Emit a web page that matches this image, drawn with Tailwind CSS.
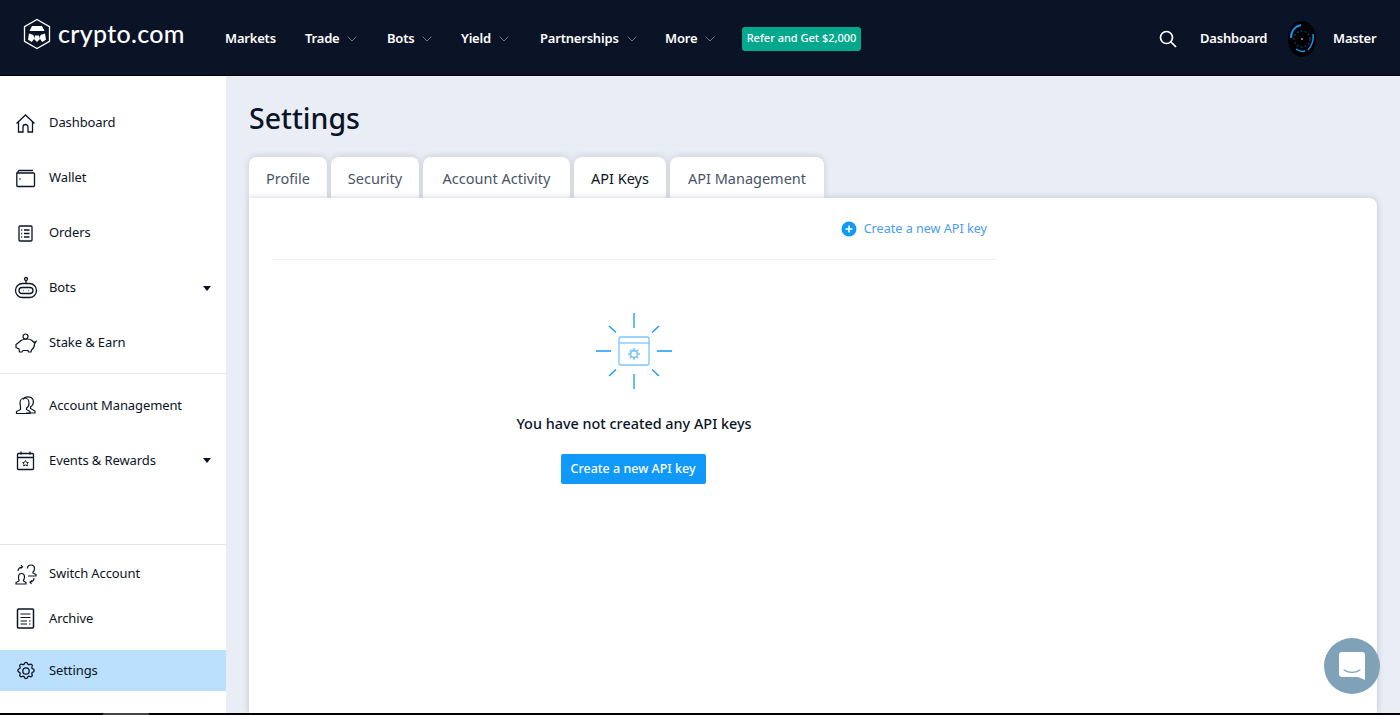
<!DOCTYPE html>
<html>
<head>
<meta charset="utf-8">
<script src="https://cdn.jsdelivr.net/npm/@tailwindcss/browser@4"></script>
</head>
<body class="flex flex-col w-[1400px] h-[715px] overflow-hidden bg-black font-['Noto_Sans',sans-serif] text-[#0b1426]">
<div class="relative flex flex-col shrink-0 w-[1400px] h-[713px] overflow-hidden bg-[#e9edf5]">
  <!-- Header -->
  <header class="flex items-center shrink-0 h-[76px] pt-[2px] bg-[#0b1426] border-b border-black text-white">
    <div class="flex items-center w-[225px] pl-[22px] pb-[10px] gap-[6px]">
      <svg class="w-[30px] h-[32px]" viewBox="0 0 30 32" fill="none">
        <path d="M15 1.500 27.500 8.700V23.300L15 30.500 2.500 23.300V8.700Z" stroke="#fff" stroke-width="1.300"/>
        <path d="M10 8h10l2.500 5h-15Z" fill="#fff"/>
        <path d="M7 15.500l4.500 1.500.8 3.500-2.500 3.500-3.800-2.200Z M23 15.500l-4.500 1.500-.8 3.500 2.500 3.500 3.800-2.200Z" fill="#fff"/>
        <path d="M13 17.500h4l1 3.500-3 3-3-3Z" fill="#fff"/>
      </svg>
      <span class="text-[25px] leading-none font-['Lato',sans-serif] font-medium tracking-[0.3px]">crypto.com</span>
    </div>
    <nav class="flex items-center text-[13px] font-semibold tracking-[-0.2px]">
      <a class="w-[80px]">Markets</a>
      <a class="flex items-center w-[82px] gap-[8px]">Trade<svg class="w-[10px] h-[6px]" viewBox="0 0 10 6" fill="none" stroke="#6b7488"><path d="M.5.5 5 5 9.500.5"/></svg></a>
      <a class="flex items-center w-[74px] gap-[8px]">Bots<svg class="w-[10px] h-[6px]" viewBox="0 0 10 6" fill="none" stroke="#6b7488"><path d="M.5.5 5 5 9.500.5"/></svg></a>
      <a class="flex items-center w-[79px] gap-[8px]">Yield<svg class="w-[10px] h-[6px]" viewBox="0 0 10 6" fill="none" stroke="#6b7488"><path d="M.5.5 5 5 9.500.5"/></svg></a>
      <a class="flex items-center w-[125px] gap-[8px]">Partnerships<svg class="w-[10px] h-[6px]" viewBox="0 0 10 6" fill="none" stroke="#6b7488"><path d="M.5.5 5 5 9.500.5"/></svg></a>
      <a class="flex items-center w-[77px] gap-[8px]">More<svg class="w-[10px] h-[6px]" viewBox="0 0 10 6" fill="none" stroke="#6b7488"><path d="M.5.5 5 5 9.500.5"/></svg></a>
      <a class="flex items-center justify-center w-[119px] h-[24px] rounded-[3px] bg-[#04a88c] text-[11px] font-medium tracking-normal whitespace-nowrap">Refer and Get $2,000</a>
    </nav>
    <div class="flex items-center ml-auto text-[13px] font-semibold tracking-[-0.2px]">
      <svg class="w-[18px] h-[18px] mr-[23px]" viewBox="0 0 18 18" fill="none" stroke="#fff" stroke-width="1.700"><circle cx="7.500" cy="7.500" r="6"/><path d="M12 12l5 5"/></svg>
      <span class="w-[87px]">Dashboard</span>
      <svg class="w-[30px] h-[38px] mr-[16px]" viewBox="0 0 30 38" fill="none">
        <ellipse cx="15" cy="19" rx="14" ry="18" fill="#000"/>
        <path d="M4 18C4 10 9 6 14 5" stroke="#1199fa" stroke-width="2"/>
        <path d="M26 14c1 5-1 12-5 16" stroke="#1199fa" stroke-width="1.500"/>
        <path d="M9 29c3 2 6 3 9 2" stroke="#1199fa" stroke-width="1.500"/>
        <circle cx="15" cy="19" r="8" stroke="#136" stroke-width="1.500" stroke-dasharray="2 2"/>
        <circle cx="15" cy="19" r="1" fill="#9aa"/>
      </svg>
      <span class="w-[67px]">Master</span>
    </div>
  </header>

  <div class="flex flex-1 min-h-0">
    <!-- Sidebar -->
    <aside class="flex flex-col w-[226px] shrink-0 bg-white text-[13px] tracking-[-0.1px]">
      <div class="pt-[19.500px] pb-[2.500px] border-b border-[#e4e6ea]">
        <a class="flex items-center h-[55px] pl-[15px] gap-[13px]">
          <svg class="w-[21px] h-[21px]" viewBox="0 0 21 21" fill="none" stroke="#0b1426" stroke-width="1.300"><path d="M1.500 10.500 10.500 2l9 8.500M3.500 9v10h4.500v-5a2.500 2.500 0 0 1 5 0v5h4.500V9"/></svg>
          Dashboard
        </a>
        <a class="flex items-center h-[55px] pl-[15px] gap-[13px]">
          <svg class="w-[21px] h-[21px]" viewBox="0 0 21 21" fill="none" stroke="#0b1426" stroke-width="1.300"><path d="M3 5V4q0-1.500 1.500-1.500H18M3 5h15.500q1 0 1 1v11.500q0 1-1 1H3q-1.200 0-1.200-1V5Z"/><circle cx="5" cy="11" r=".8" fill="#0b1426" stroke="none"/></svg>
          Wallet
        </a>
        <a class="flex items-center h-[55px] pl-[15px] gap-[13px]">
          <svg class="w-[21px] h-[21px]" viewBox="0 0 21 21" fill="none" stroke="#0b1426" stroke-width="1.300"><rect x="4" y="3" width="13" height="15" rx="1"/><path d="M9 7h5.500M9 10.500h5.500M9 14h5.500M6.200 7h1M6.200 10.500h1M6.200 14h1"/></svg>
          Orders
        </a>
        <a class="flex items-center h-[55px] pl-[14px] gap-[11px]">
          <svg class="w-[24px] h-[24px]" viewBox="0 0 24 24" fill="none" stroke="#0b1426" stroke-width="1.300"><circle cx="12" cy="3" r="1.500"/><path d="M12 4.500V7"/><rect x="1.500" y="7.500" width="21" height="14" rx="7"/><rect x="5" y="11.500" width="14" height="6" rx="3"/><path d="M9 14.500h.5M14.500 14.500h.5"/></svg>
          Bots
          <svg class="ml-auto mr-[15px] w-[8px] h-[5px]" viewBox="0 0 8 5" fill="#0b1426"><path d="M0 0h8L4 5Z"/></svg>
        </a>
        <a class="flex items-center h-[55px] pl-[14px] gap-[12px]">
          <svg class="w-[23px] h-[23px]" viewBox="0 0 23 23" fill="none" stroke="#0b1426" stroke-width="1.200"><circle cx="11.500" cy="4.500" r="2.500"/><path d="M7 8.500c3-2 9-2 11 0l2 2 2-1-1.500 2.500c0 3-1.500 5-3 6l-.5 2h-2.500l-.5-1.500h-5L8 20H5.500l-.5-3-3-1.500v-3l2-1.500Z"/></svg>
          Stake &amp; Earn
        </a>
      </div>
      <div class="pt-[4px] flex-1">
        <a class="flex items-center h-[55px] pl-[15px] gap-[12px]">
          <svg class="w-[22px] h-[22px]" viewBox="0 0 22 22" fill="none" stroke="#0b1426" stroke-width="1.200"><path d="M8 4.500c2-3.500 8-3.500 10 0 1 3-.5 6-2.500 7.500v1.500l4.500 2.500v2H11"/><path d="M5 8c0-3 2-5 4.500-5S14 5 14 8s-1.500 4.500-2.500 5v1.500l3.500 2v2H1.500v-2l4-2V13C6 12.500 5 11 5 8Z"/></svg>
          Account Management
        </a>
        <a class="flex items-center h-[55px] pl-[15px] gap-[13px]">
          <svg class="w-[21px] h-[21px]" viewBox="0 0 21 21" fill="none" stroke="#0b1426" stroke-width="1.300"><rect x="2.500" y="3.500" width="16" height="16" rx="1"/><path d="M2.500 7.500h16M6 1.500v3M15 1.500v3"/><path d="m10.500 10.500.9 1.800 2 .3-1.400 1.400.3 2-1.800-1-1.800 1 .3-2-1.400-1.400 2-.3Z" stroke-width=".9"/></svg>
          Events &amp; Rewards
          <svg class="ml-auto mr-[15px] w-[8px] h-[5px]" viewBox="0 0 8 5" fill="#0b1426"><path d="M0 0h8L4 5Z"/></svg>
        </a>
      </div>
      <div class="border-t border-[#e4e6ea] pt-[7px] pb-[22px]">
        <a class="flex items-center h-[44px] pl-[15px] gap-[12px]">
          <svg class="w-[22px] h-[22px]" viewBox="0 0 22 22" fill="none" stroke="#0b1426" stroke-width="1.200"><path d="M12.500 5.500c0-2 1.500-3.500 3.500-3.500s3.500 1.500 3.500 3.500-1 3-1.500 3.500v1l3 1.500v1.500H13"/><path d="M3.500 14c0-2 1-3.500 3-3.500s3 1.500 3 3.500-.5 2.500-1 3v1l2.500 1.500V21H1v-1.500L4 18v-1c-.5-.5-.5-1-.5-3Z"/><path d="M3 8c0-2 1.500-3.500 4-4M6 2l1.500 2L5.500 5.500M19 15c0 2-1 3.500-3.500 4M16.500 21 15 19l2-1.500"/></svg>
          Switch Account
        </a>
        <a class="flex items-center h-[45px] pl-[15px] gap-[13px]">
          <svg class="w-[21px] h-[21px]" viewBox="0 0 21 21" fill="none" stroke="#0b1426" stroke-width="1.500"><rect x="2.500" y="1" width="16" height="19" rx="1"/><path d="M5.500 6h10M5.500 9.500h10M5.500 13h6.500M5.500 16h6.500M14 13h1.500M14 16h1.500" stroke-width="1.200"/></svg>
          Archive
        </a>
        <a class="flex items-center h-[41px] mt-[9px] pl-[15px] pt-[1px] gap-[12px] bg-[#bae0fd]">
          <svg class="w-[22px] h-[22px]" viewBox="0 0 24 24" fill="none" stroke="#0b1426" stroke-width="1.400"><path d="M10.300 2.800c.4-1.700 3-1.700 3.400 0a1.700 1.700 0 0 0 2.600 1c1.500-.9 3.200.8 2.300 2.300a1.700 1.700 0 0 0 1 2.600c1.700.4 1.700 3 0 3.400a1.700 1.700 0 0 0-1 2.600c.9 1.500-.8 3.200-2.300 2.300a1.700 1.700 0 0 0-2.600 1c-.4 1.700-3 1.700-3.400 0a1.700 1.700 0 0 0-2.600-1c-1.500.9-3.200-.8-2.300-2.300a1.700 1.700 0 0 0-1-2.600c-1.700-.4-1.700-3 0-3.400a1.700 1.700 0 0 0 1-2.600C4.500 4.600 6.200 2.900 7.700 3.800a1.700 1.700 0 0 0 2.600-1Z" transform="translate(0 1)"/><circle cx="12" cy="11" r="3.500" transform="translate(0 1)"/></svg>
          Settings
        </a>
      </div>
    </aside>

    <!-- Main -->
    <main class="flex flex-col flex-1 min-w-0 pl-[23px] pr-[23px]">
      <h1 class="h-[81px] pt-[19px] text-[28.500px] leading-[46px] font-medium">Settings</h1>
      <div class="flex gap-[4px] text-[14.500px] text-[#4a5467]">
        <a class="flex items-center justify-center w-[78px] h-[41px] pt-[2px] bg-white rounded-t-[8px] shadow-[0_-1px_6px_rgba(60,70,100,0.18)]">Profile</a>
        <a class="flex items-center justify-center w-[88px] h-[41px] pt-[2px] bg-white rounded-t-[8px] shadow-[0_-1px_6px_rgba(60,70,100,0.18)]">Security</a>
        <a class="flex items-center justify-center w-[147px] h-[41px] pt-[2px] bg-white rounded-t-[8px] shadow-[0_-1px_6px_rgba(60,70,100,0.18)]">Account Activity</a>
        <a class="flex items-center justify-center w-[92px] h-[41px] pt-[2px] bg-white rounded-t-[8px] shadow-[0_-1px_6px_rgba(60,70,100,0.18)] text-[#0b1426]">API Keys</a>
        <a class="flex items-center justify-center w-[154px] h-[41px] pt-[2px] bg-white rounded-t-[8px] shadow-[0_-1px_6px_rgba(60,70,100,0.18)]">API Management</a>
      </div>
      <section class="relative flex-1 bg-white rounded-tr-[8px] shadow-[0_0_6px_rgba(60,70,100,0.25)] pl-[23px]">
        <div class="flex flex-col items-center w-[724px]">
          <div class="flex items-center justify-end self-stretch h-[62px] pr-[9px] pt-[1px] border-b border-[#eef0f4] gap-[7px] text-[12.600px] text-[#4a9cf0]">
            <svg class="w-[16px] h-[16px]" viewBox="0 0 16 16"><circle cx="8" cy="8" r="7.500" fill="#1199fa"/><path d="M8 4.500v7M4.500 8h7" stroke="#fff" stroke-width="1.600"/></svg>
            Create a new API key
          </div>
          <svg class="w-[76px] h-[76px] mt-[53px]" viewBox="0 0 76 76" fill="none" stroke="#1199fa" stroke-width="1.300">
            <path d="M38 0v15M38 61v15M0 38h15M61 38h15M13 13l7 6.500M63 13l-7 6.500M13 63l7-6.500M63 63l-7-6.500"/>
            <g stroke="#7cc4fb">
              <rect x="23" y="24" width="30" height="28" rx="2"/>
              <path d="M23 30h30"/>
              <circle cx="38" cy="41" r="3.500" stroke-width="1.800"/>
              <path d="M38 35v2.500M38 44.500V47M32 41h2.500M41.500 41H44M33.800 36.800l1.700 1.700M40.500 43.500l1.700 1.700M42.200 36.800l-1.700 1.700M35.500 43.500l-1.700 1.700" stroke-width="1.500"/>
            </g>
          </svg>
          <p class="mt-[23px] text-[14.400px] leading-[24px] font-medium">You have not created any API keys</p>
          <button class="mt-[18px] mr-[2px] w-[145px] h-[30px] rounded-[2px] bg-[#1199fa] text-white text-[12.500px] font-medium">Create a new API key</button>
        </div>
      </section>
    </main>
  </div>

  <!-- Chat bubble -->
  <div class="absolute left-[1324px] top-[638px] flex items-center justify-center w-[56px] h-[56px] rounded-full bg-[#7fa2b8]">
    <svg class="w-[28px] h-[30px]" viewBox="0 0 28 30"><path d="M4 1h20q3 0 3 3v25l-7-3H4q-3 0-3-3V4q0-3 3-3Z" fill="#fff"/><path d="M6 19c5 3 11 3 16 0" fill="none" stroke="#7fa2b8" stroke-width="1.300" stroke-linecap="round"/></svg>
  </div>
</div>
<div class="h-[2px] w-[46px] ml-[103px] bg-[#444]"></div>
</body>
</html>
